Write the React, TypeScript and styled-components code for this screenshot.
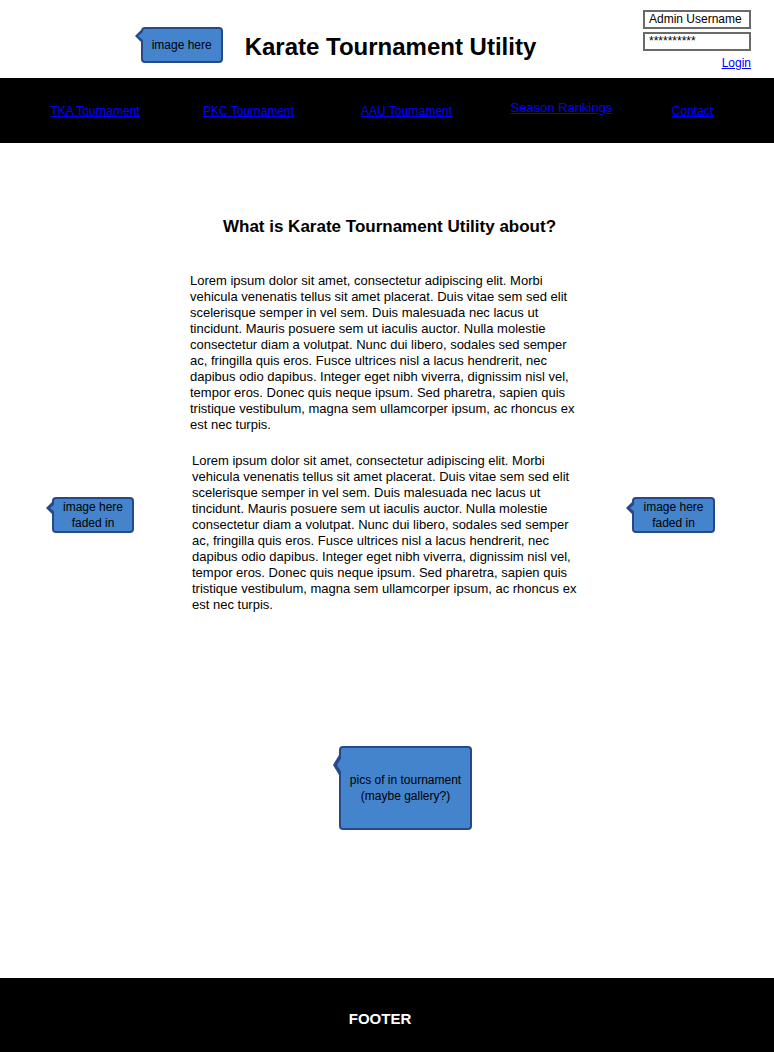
import { createGlobalStyle, styled } from "styled-components";

const GlobalStyle = createGlobalStyle`
  html, body {
    margin: 0;
    padding: 0;
    background: #ffffff;
    font-family: "Liberation Sans", Arial, sans-serif;
    color: #000000;
  }
`;

const Color = {
  Fill: "#4484cd",
  Edge: "#27498c",
  Link: "#0000ff",
  Bar: "#000000",
};

const Page = styled.div`
  width: 774px;
  display: flex;
  flex-direction: column;
`;

const Header = styled.header`
  height: 78px;
  box-sizing: border-box;
  padding-left: 7px;
  display: grid;
  grid-template-columns: 1fr auto 1fr;
  align-items: center;
`;

const HeaderLeft = styled.div`
  display: flex;
  justify-content: flex-end;
  margin-right: 22px;
  padding-top: 11px;
`;

const Title = styled.h1`
  margin: 0;
  font-size: 24px;
  line-height: 28px;
  font-weight: bold;
  padding-top: 16px;
`;

const LoginBox = styled.div`
  align-self: start;
  justify-self: end;
  margin-right: 23px;
  padding-top: 10px;
  display: flex;
  flex-direction: column;
  gap: 3px;
  width: 108px;
`;

const Field = styled.div`
  box-sizing: border-box;
  height: 19px;
  border: 2px solid #6a6a6a;
  padding-left: 4px;
  font-size: 12px;
  line-height: 15px;
  white-space: nowrap;
  overflow: hidden;
`;

const LoginLink = styled.a`
  align-self: flex-end;
  margin-top: 2px;
  font-size: 12px;
  line-height: 14px;
  color: ${Color.Link};
  text-decoration: underline;
`;

const Nav = styled.nav`
  height: 65px;
  background: ${Color.Bar};
  padding-left: 20px;
  display: grid;
  grid-template-columns: 150px 157px 159px 151px 111px;
  align-items: center;
`;

const NavLink = styled.a<{ $big?: boolean }>`
  justify-self: center;
  font-size: ${({ $big }) => ($big ? "13px" : "12px")};
  line-height: 14px;
  color: ${Color.Link};
  text-decoration: underline;
  white-space: nowrap;
  margin-bottom: ${({ $big }) => ($big ? "6px" : "0")};
`;

const Heading = styled.h2`
  margin: 74px 0 0 0;
  padding-left: 5px;
  text-align: center;
  font-size: 17px;
  line-height: 20px;
  font-weight: bold;
`;

const TextGrid = styled.section`
  margin-top: 36px;
  display: grid;
  grid-template-columns: 190px 390px 1fr;
  row-gap: 20px;
`;

const Para = styled.p<{ $row: number; $shift?: number }>`
  grid-column: 2;
  grid-row: ${({ $row }) => $row};
  margin: 0 0 0 ${({ $shift }) => $shift ?? 0}px;
  font-size: 13px;
  line-height: 16px;
  white-space: nowrap;
`;

const Side = styled.div<{ $col: number }>`
  grid-row: 2;
  grid-column: ${({ $col }) => $col};
  justify-self: start;
  align-self: start;
  margin: 44px 0 0 52px;
`;

const Gallery = styled.div`
  margin-top: 133px;
  padding-left: 37px;
  display: flex;
  justify-content: center;
`;

type CalloutProps = {
  $w: number;
  $h: number;
  $at: number;
  $half: number;
};

const Callout = styled.div<CalloutProps>`
  position: relative;
  box-sizing: border-box;
  width: ${({ $w }) => $w}px;
  height: ${({ $h }) => $h}px;
  background: ${Color.Fill};
  border: 2px solid ${Color.Edge};
  border-radius: 4px;
  display: flex;
  align-items: center;
  justify-content: center;
  text-align: center;
  font-size: 12px;
  line-height: 16px;
  color: #000;

  &::before,
  &::after {
    content: "";
    position: absolute;
    width: 0;
    height: 0;
    border-style: solid;
  }

  &::before {
    left: -8px;
    top: ${({ $at, $half }) => $at - $half - 2}px;
    border-width: ${({ $half }) => `${$half}px 6px ${$half}px 0`};
    border-color: transparent ${Color.Edge} transparent transparent;
  }

  &::after {
    left: -4.5px;
    top: ${({ $at, $half }) => $at - ($half - 2) - 2}px;
    border-width: ${({ $half }) => `${$half - 2}px 5px ${$half - 2}px 0`};
    border-color: transparent ${Color.Fill} transparent transparent;
  }
`;

const Footer = styled.footer`
  margin-top: 148px;
  height: 74px;
  box-sizing: border-box;
  padding: 6px 14px 0 0;
  background: ${Color.Bar};
  color: #fff;
  display: flex;
  align-items: center;
  justify-content: center;
  font-size: 15px;
  font-weight: bold;
`;

const lorem = [
  "Lorem ipsum dolor sit amet, consectetur adipiscing elit. Morbi",
  "vehicula venenatis tellus sit amet placerat. Duis vitae sem sed elit",
  "scelerisque semper in vel sem. Duis malesuada nec lacus ut",
  "tincidunt. Mauris posuere sem ut iaculis auctor. Nulla molestie",
  "consectetur diam a volutpat. Nunc dui libero, sodales sed semper",
  "ac, fringilla quis eros. Fusce ultrices nisl a lacus hendrerit, nec",
  "dapibus odio dapibus. Integer eget nibh viverra, dignissim nisl vel,",
  "tempor eros. Donec quis neque ipsum. Sed pharetra, sapien quis",
  "tristique vestibulum, magna sem ullamcorper ipsum, ac rhoncus ex",
  "est nec turpis.",
];

function Lines({ lines }: { lines: string[] }) {
  return (
    <>
      {lines.map((line, i) => (
        <span key={i}>
          {line}
          {i < lines.length - 1 && <br />}
        </span>
      ))}
    </>
  );
}

const navItems = [
  { label: "TKA Tournament" },
  { label: "PKC Tournament" },
  { label: "AAU Tournament" },
  { label: "Season Rankings", big: true },
  { label: "Contact" },
];

export default function App() {
  return (
    <Page>
      <GlobalStyle />
      <Header>
        <HeaderLeft>
          <Callout $w={82} $h={36} $at={9} $half={6}>
            image here
          </Callout>
        </HeaderLeft>
        <Title>Karate Tournament Utility</Title>
        <LoginBox>
          <Field>Admin Username</Field>
          <Field>**********</Field>
          <LoginLink href="#">Login</LoginLink>
        </LoginBox>
      </Header>

      <Nav>
        {navItems.map((item) => (
          <NavLink key={item.label} href="#" $big={item.big}>
            {item.label}
          </NavLink>
        ))}
      </Nav>

      <Heading>What is Karate Tournament Utility about?</Heading>

      <TextGrid>
        <Para $row={1}>
          <Lines lines={lorem} />
        </Para>
        <Side $col={1}>
          <Callout $w={82} $h={36} $at={11} $half={6}>
            image here
            <br />
            faded in
          </Callout>
        </Side>
        <Para $row={2} $shift={2}>
          <Lines lines={lorem} />
        </Para>
        <Side $col={3}>
          <Callout $w={83} $h={36} $at={11} $half={6}>
            image here
            <br />
            faded in
          </Callout>
        </Side>
      </TextGrid>

      <Gallery>
        <Callout $w={133} $h={84} $at={19} $half={10}>
          pics of in tournament
          <br />
          (maybe gallery?)
        </Callout>
      </Gallery>

      <Footer>FOOTER</Footer>
    </Page>
  );
}
